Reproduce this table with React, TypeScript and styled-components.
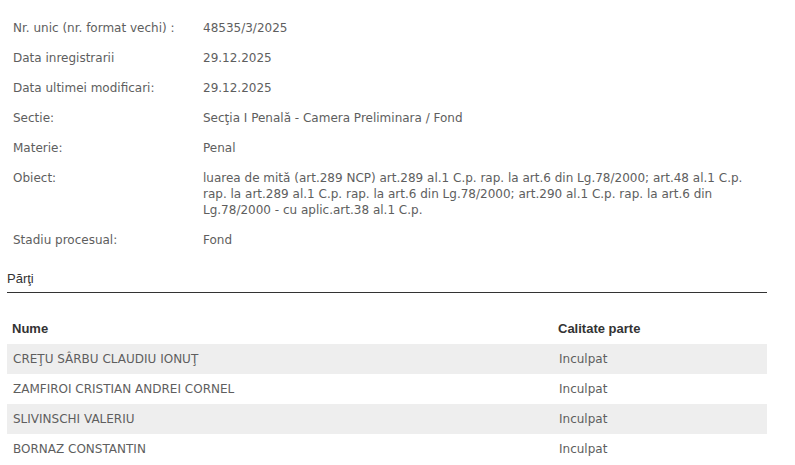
import styled, { createGlobalStyle } from "styled-components";

const GlobalStyle = createGlobalStyle`
  body {
    margin: 0;
    background: #fff;
  }
`;

const Page = styled.div`
  padding: 13px 28px 0 7px;
  font-family: "DejaVu Sans", Verdana, sans-serif;
  font-size: 12px;
  color: #5e5e5e;
`;

const InfoList = styled.div`
  display: grid;
  grid-template-columns: 190px 1fr;
  padding-left: 6px;
`;

const InfoLabel = styled.div`
  padding: 7px 0;
  line-height: 16px;
`;

const InfoValue = styled.div`
  padding: 7px 0;
  line-height: 16px;
  max-width: 550px;
`;

const SectionTitle = styled.div`
  margin-top: 16px;
  padding-bottom: 6px;
  border-bottom: 1px solid #333;
  font-family: "Liberation Sans", Arial, sans-serif;
  font-size: 13px;
  color: #333;
`;

const PartiesTable = styled.div`
  margin-top: 19px;
`;

const TableRow = styled.div<{ $shaded?: boolean; $head?: boolean }>`
  display: grid;
  grid-template-columns: 546px 1fr;
  height: ${({ $head }) => ($head ? "32px" : "30px")};
  align-items: center;
  background: ${({ $shaded }) => ($shaded ? "#eee" : "transparent")};
`;

const Cell = styled.div`
  padding-left: 6px;
`;

const HeadCell = styled.div`
  padding-left: 5px;
  font-family: "Liberation Sans", Arial, sans-serif;
  font-weight: bold;
  font-size: 13px;
  color: #333;
`;

const info: [string, string][] = [
  ["Nr. unic (nr. format vechi) :", "48535/3/2025"],
  ["Data inregistrarii", "29.12.2025"],
  ["Data ultimei modificari:", "29.12.2025"],
  ["Sectie:", "Secţia I Penală - Camera Preliminara / Fond"],
  ["Materie:", "Penal"],
  [
    "Obiect:",
    "luarea de mită (art.289 NCP) art.289 al.1 C.p. rap. la art.6 din Lg.78/2000; art.48 al.1 C.p. rap. la art.289 al.1 C.p. rap. la art.6 din Lg.78/2000; art.290 al.1 C.p. rap. la art.6 din Lg.78/2000 - cu aplic.art.38 al.1 C.p.",
  ],
  ["Stadiu procesual:", "Fond"],
];

const parties = [
  "CREŢU SÂRBU CLAUDIU IONUŢ",
  "ZAMFIROI CRISTIAN ANDREI CORNEL",
  "SLIVINSCHI VALERIU",
  "BORNAZ CONSTANTIN",
];

export default function App() {
  return (
    <>
      <GlobalStyle />
      <Page>
        <InfoList>
          {info.map(([label, value]) => (
            <>
              <InfoLabel key={label}>{label}</InfoLabel>
              <InfoValue key={label + "-v"}>{value}</InfoValue>
            </>
          ))}
        </InfoList>
        <SectionTitle>Părţi</SectionTitle>
        <PartiesTable>
          <TableRow $head>
            <HeadCell>Nume</HeadCell>
            <HeadCell>Calitate parte</HeadCell>
          </TableRow>
          {parties.map((name, i) => (
            <TableRow key={name} $shaded={i % 2 === 0}>
              <Cell>{name}</Cell>
              <Cell>Inculpat</Cell>
            </TableRow>
          ))}
        </PartiesTable>
      </Page>
    </>
  );
}
